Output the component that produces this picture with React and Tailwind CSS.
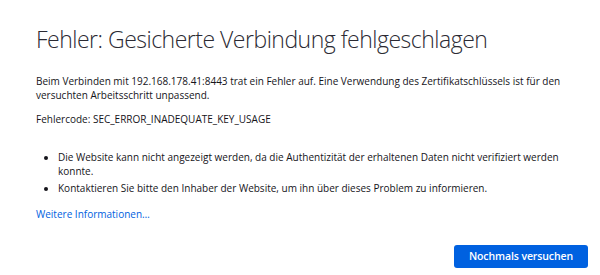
export default function App() {
  return (
    <div className="w-[600px] h-[275px] bg-white text-[#15141a] overflow-hidden font-['Open_Sans','Noto_Sans',sans-serif]">
      <div className="pl-[36px] pr-[12px] pt-[24px]">
        {/* TITLE */}
        <h1 className="text-[23px] font-light leading-[30px] text-[#2b2a33] tracking-[-0.5px]">
          Fehler: Gesicherte Verbindung fehlgeschlagen
        </h1>

        {/* DESCRIPTION */}
        <p className="mt-[20px] text-[10px] leading-[14px]">
          Beim Verbinden mit 192.168.178.41:8443 trat ein Fehler auf. Eine Verwendung des Zertifikatschlüssels ist für den versuchten Arbeitsschritt unpassend.
        </p>
        <p className="mt-[10px] text-[10px] leading-[14px]">
          Fehlercode: SEC_ERROR_INADEQUATE_KEY_USAGE
        </p>

        {/* LIST */}
        <ul className="mt-[24px] pl-[22px] list-disc list-outside text-[10px] leading-[14px] flex flex-col gap-[3px]">
          <li>
            Die Website kann nicht angezeigt werden, da die Authentizität der erhaltenen Daten nicht verifiziert werden konnte.
          </li>
          <li>
            Kontaktieren Sie bitte den Inhaber der Website, um ihn über dieses Problem zu informieren.
          </li>
        </ul>

        <a className="block mt-[12px] text-[10px] leading-[14px] text-[#0061e0]">
          Weitere Informationen…
        </a>

        {/* ACTION */}
        <div className="flex justify-end mt-[24px]">
          <button className="w-[134px] h-[23px] rounded-[3px] bg-[#0061e0] text-white text-[10.5px] font-semibold tracking-[-0.1px]">
            Nochmals versuchen
          </button>
        </div>
      </div>
    </div>
  );
}
